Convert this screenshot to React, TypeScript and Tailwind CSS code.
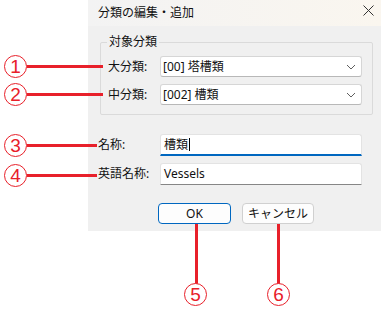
import React from 'react';

const RED = 'bg-[#e8202a]';

function Circled({ n, className }: { n: string; className: string }) {
  return (
    <div
      className={`absolute w-[23px] h-[23px] rounded-full border-[1.5px] border-[#e8202a] bg-white flex items-center justify-center ${className}`}
    >
      <span className="text-[19px] leading-none text-[#e8202a] font-['Liberation_Sans',sans-serif]">{n}</span>
    </div>
  );
}

function Chevron() {
  return (
    <svg width="10" height="6" viewBox="0 0 10 6" className="text-[#5f5f5f]">
      <path d="M1 1 L5 5 L9 1" fill="none" stroke="currentColor" strokeWidth="1" />
    </svg>
  );
}

function Combo({ value }: { value: string }) {
  return (
    <div className="w-[202px] h-[21px] bg-white border border-[#d6d6d6] border-b-[#b8b8b8] rounded-[3px] flex items-center justify-between pl-[2px] pr-[5px]">
      <span className="leading-none">{value}</span>
      <Chevron />
    </div>
  );
}

export default function App() {
  return (
    <div className="relative w-[381px] h-[319px] bg-white overflow-hidden font-['Noto_Sans','Noto_Sans_CJK_JP',sans-serif] text-[12px] text-[#111]">
      <div className="ml-[88px] w-[293px] h-[231px] bg-[#f0f0f0] flex flex-col">
        {/* title bar */}
        <div className="h-[26px] flex items-center justify-between pl-[10px] pr-[7px] bg-linear-to-r from-[#f3f3f3] to-[#faf6ef]">
          <span className="leading-none">分類の編集・追加</span>
          <svg width="11" height="11" viewBox="0 0 11 11" className="mb-[5px]">
            <path d="M0.5 0.5 L10.5 10.5 M10.5 0.5 L0.5 10.5" stroke="#333" strokeWidth="1" />
          </svg>
        </div>

        {/* group box */}
        <div className="relative ml-[12px] mr-[8px] mt-[16px] h-[73px] border border-[#dadada] rounded-[2px] pt-[13px] pl-[7px] pr-[10px] flex flex-col gap-[7px]">
          <span className="absolute -top-[9px] left-[6px] px-[2px] bg-[#f0f0f0] leading-[16px]">対象分類</span>
          <div className="flex items-center">
            <span className="w-[52px] leading-none">大分類:</span>
            <Combo value="[00] 塔槽類" />
          </div>
          <div className="flex items-center">
            <span className="w-[52px] leading-none">中分類:</span>
            <Combo value="[002] 槽類" />
          </div>
        </div>

        {/* name fields */}
        <div className="mt-[19px] pl-[10px] flex flex-col gap-[7px]">
          <div className="flex items-center">
            <span className="w-[62px] leading-none">名称:</span>
            <div className="w-[202px] h-[22px] bg-white border border-[#e3e3e3] border-b-2 border-b-[#0067c0] rounded-t-[3px] flex items-center pl-[3px]">
              <span className="leading-none">槽類</span>
              <span className="w-px h-[13px] bg-black ml-px" />
            </div>
          </div>
          <div className="flex items-center">
            <span className="w-[62px] leading-none">英語名称:</span>
            <div className="w-[202px] h-[22px] bg-white border border-[#e3e3e3] border-b-[#868686] rounded-t-[3px] flex items-center pl-[3px]">
              <span className="leading-none">Vessels</span>
            </div>
          </div>
        </div>

        {/* buttons */}
        <div className="mt-[18px] pl-[70px] flex gap-[11px]">
          <div className="w-[73px] h-[21px] rounded-[4px] border border-[#0067c0] bg-[#fdfdfd] flex items-center justify-center leading-none">OK</div>
          <div className="w-[72px] h-[21px] rounded-[4px] border border-[#d0d0d0] bg-[#fdfdfd] flex items-center justify-center leading-none">キャンセル</div>
        </div>
      </div>

      {/* annotations */}
      <div className={`absolute left-[27px] top-[65px] w-[76px] h-[3px] ${RED}`} />
      <div className={`absolute left-[27px] top-[93px] w-[76px] h-[3px] ${RED}`} />
      <div className={`absolute left-[27px] top-[144px] w-[70px] h-[3px] ${RED}`} />
      <div className={`absolute left-[27px] top-[174px] w-[70px] h-[3px] ${RED}`} />
      <div className={`absolute left-[195px] top-[224px] w-[3px] h-[60px] ${RED}`} />
      <div className={`absolute left-[277px] top-[224px] w-[3px] h-[60px] ${RED}`} />
      <Circled n="1" className="left-[4px] top-[55px]" />
      <Circled n="2" className="left-[4px] top-[83px]" />
      <Circled n="3" className="left-[4px] top-[134px]" />
      <Circled n="4" className="left-[4px] top-[164px]" />
      <Circled n="5" className="left-[184px] top-[283px]" />
      <Circled n="6" className="left-[267px] top-[283px]" />
    </div>
  );
}
